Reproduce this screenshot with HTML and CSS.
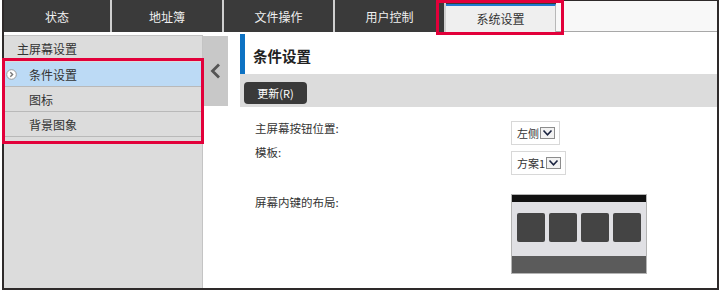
FILE: index.html
```html
<!DOCTYPE html>
<html>
<head>
    <meta charset="UTF-8">
    <title>系统设置</title>
    <link rel="stylesheet" href="styles.css">
</head>
<body>
    <div class="screen">
        <div class="tabbar">
            <div class="tab tab-first">状态</div>
            <div class="tab tab-wide">地址簿</div>
            <div class="tab">文件操作</div>
            <div class="tab">用户控制</div>
            <div class="tab tab-active">系统设置</div>
            <div class="tab-fill"></div>
        </div>

        <div class="page">
            <div class="sidebar">
                <div class="side-head">主屏幕设置</div>
                <div class="side-item selected">
                    <svg class="side-icon" width="11" height="11" viewBox="0 0 11 11">
                        <circle cx="5.5" cy="5.5" r="4.8" fill="#fff" stroke="#9a9a9a" stroke-width="1"/>
                        <path d="M4.3 3.2 L6.6 5.5 L4.3 7.8" fill="none" stroke="#777" stroke-width="1.4"/>
                    </svg>
                    条件设置
                </div>
                <div class="side-item">图标</div>
                <div class="side-item">背景图象</div>
            </div>

            <div class="collapse">
                <svg width="11" height="16" viewBox="0 0 11 16">
                    <path d="M9 1.5 L2.5 8 L9 14.5" fill="none" stroke="#555" stroke-width="2.8"/>
                </svg>
            </div>

            <div class="main">
                <div class="title">条件设置</div>
                <div class="toolbar">
                    <button class="update-button">更新(R)</button>
                </div>

                <div class="form">
                    <div class="row row-first">
                        <div class="label">主屏幕按钮位置:</div>
                        <div class="select select-short">
                            <span>左侧</span>
                            <span class="drop">
                                <svg width="11" height="8" viewBox="0 0 11 8"><path d="M1.5 1.5 L5.5 5.8 L9.5 1.5" fill="none" stroke="#1a2340" stroke-width="1.6"/></svg>
                            </span>
                        </div>
                    </div>
                    <div class="row row-second">
                        <div class="label">模板:</div>
                        <div class="select select-long">
                            <span>方案1</span>
                            <span class="drop">
                                <svg width="11" height="8" viewBox="0 0 11 8"><path d="M1.5 1.5 L5.5 5.8 L9.5 1.5" fill="none" stroke="#1a2340" stroke-width="1.6"/></svg>
                            </span>
                        </div>
                    </div>
                    <div class="row row-third">
                        <div class="label">屏幕内键的布局:</div>
                        <div class="preview">
                            <div class="preview-top"></div>
                            <div class="preview-keys">
                                <div class="key"></div>
                                <div class="key"></div>
                                <div class="key"></div>
                                <div class="key"></div>
                            </div>
                            <div class="preview-bottom"></div>
                        </div>
                    </div>
                </div>
            </div>
        </div>

        <div class="mark mark-tab"></div>
        <div class="mark mark-menu"></div>
    </div>
</body>
</html>
```

FILE: styles.css
```css
:root {
    --ui-font: "Noto Sans CJK SC", "Noto Sans", sans-serif;
}

* {
    margin: 0;
    padding: 0;
    box-sizing: border-box;
}

body {
    width: 720px;
    height: 291px;
    background: #ffffff;
    font-family: var(--ui-font);
    color: #333;
    overflow: hidden;
}

.screen {
    position: relative;
    margin-left: 2px;
    width: 717px;
    height: 290px;
    border: 2px solid #2e2a2a;
    border-top: none;
    background: #fff;
}

/* 顶部标签栏 */
.tabbar {
    display: flex;
    height: 32px;
    background: #3a3a3a;
}

.tab {
    width: 111px;
    height: 32px;
    border-right: 2px solid #cfcfcf;
    color: #f0f0f0;
    font-size: 12px;
    line-height: 34px;
    text-align: center;
}

.tab-first {
    width: 108px;
}

.tab-wide {
    width: 112px;
}

.tab-active {
    width: 110px;
    height: 28px;
    margin-top: 4px;
    border-top: 2px solid #1f7ad0;
    border-right: 1px solid #b8b8b8;
    background: #efefef;
    color: #333;
    line-height: 25px;
}

.tab-fill {
    flex: 1;
    background: #f8f8f8;
    border-top: 1px solid #2e2a2a;
    border-bottom: 1px solid #a8a8a8;
}

.page {
    display: flex;
    height: 256px;
}

/* 左侧菜单 */
.sidebar {
    width: 199px;
    margin-top: 3px;
    background: #dcdcdc;
    border-top: 1px solid #c2c2c2;
    border-right: 1px solid #c4c4c4;
}

.side-head {
    height: 26px;
    padding-left: 13px;
    font-size: 12px;
    line-height: 26px;
}

.side-item {
    display: flex;
    align-items: center;
    height: 25px;
    padding-left: 25px;
    border-bottom: 1px solid #b9b9b9;
    font-size: 12px;
}

.side-item.selected {
    padding-left: 2px;
    background: #bcdaf5;
}

.side-icon {
    margin-right: 12px;
}

.collapse {
    display: flex;
    align-items: center;
    justify-content: center;
    width: 25px;
    height: 70px;
    margin-top: 4px;
    background: #c8c8c8;
}

/* 右侧内容 */
.main {
    flex: 1;
    margin-top: 2px;
    padding-left: 12px;
}

.title {
    height: 40px;
    padding: 4px 0 0 8px;
    border-left: 5px solid #0d72c3;
    font-size: 14.5px;
    font-weight: bold;
    line-height: 36px;
    color: #222;
}

.toolbar {
    height: 33px;
    padding: 5px 4px;
    background: #dcdcdc;
}

.update-button {
    width: 63px;
    height: 22px;
    border: none;
    border-radius: 4px;
    background: #3a3a3a;
    color: #fff;
    font-family: var(--ui-font);
    font-size: 11px;
}

.form {
    padding-left: 15px;
}

.row {
    display: grid;
    grid-template-columns: 256px auto;
    align-items: start;
}

.label {
    font-size: 11.5px;
    line-height: 16px;
}

.row-first {
    margin-top: 14px;
}

.row-first .label {
    margin-top: -1px;
}

.row-second {
    margin-top: 6px;
}

.row-second .label {
    margin-top: -7px;
}

.row-third {
    margin-top: 19px;
}

.select {
    display: inline-flex;
    align-items: center;
    height: 24px;
    padding-left: 5px;
    border: 1px solid #d8d8d8;
    background: #fff;
    font-size: 11px;
}

.select-short {
    width: 49px;
}

.select-long {
    width: 55px;
}

.select span:first-child {
    margin-right: 1px;
}

.drop {
    display: flex;
    align-items: center;
    justify-content: center;
    width: 15px;
    height: 12px;
    border: 1px solid #8c8c8c;
    background: #f2f2f2;
}

.preview {
    width: 136px;
    height: 80px;
    border: 1px solid #b4b4b4;
    background: #e0e0e4;
    display: flex;
    flex-direction: column;
}

.preview-top {
    height: 7px;
    background: #111;
}

.preview-keys {
    flex: 1;
    display: flex;
    gap: 4px;
    padding: 11px 4px 0 5px;
}

.key {
    width: 28px;
    height: 29px;
    border-radius: 2px;
    background: #444;
}

.preview-bottom {
    height: 17px;
    background: #5b5b5b;
}

/* 红色标注框 */
.mark {
    position: absolute;
    border: 3px solid #e2003a;
}

.mark-tab {
    left: 432px;
    top: 0;
    width: 128px;
    height: 35px;
}

.mark-menu {
    left: -2px;
    top: 58px;
    width: 202px;
    height: 86px;
}
```
